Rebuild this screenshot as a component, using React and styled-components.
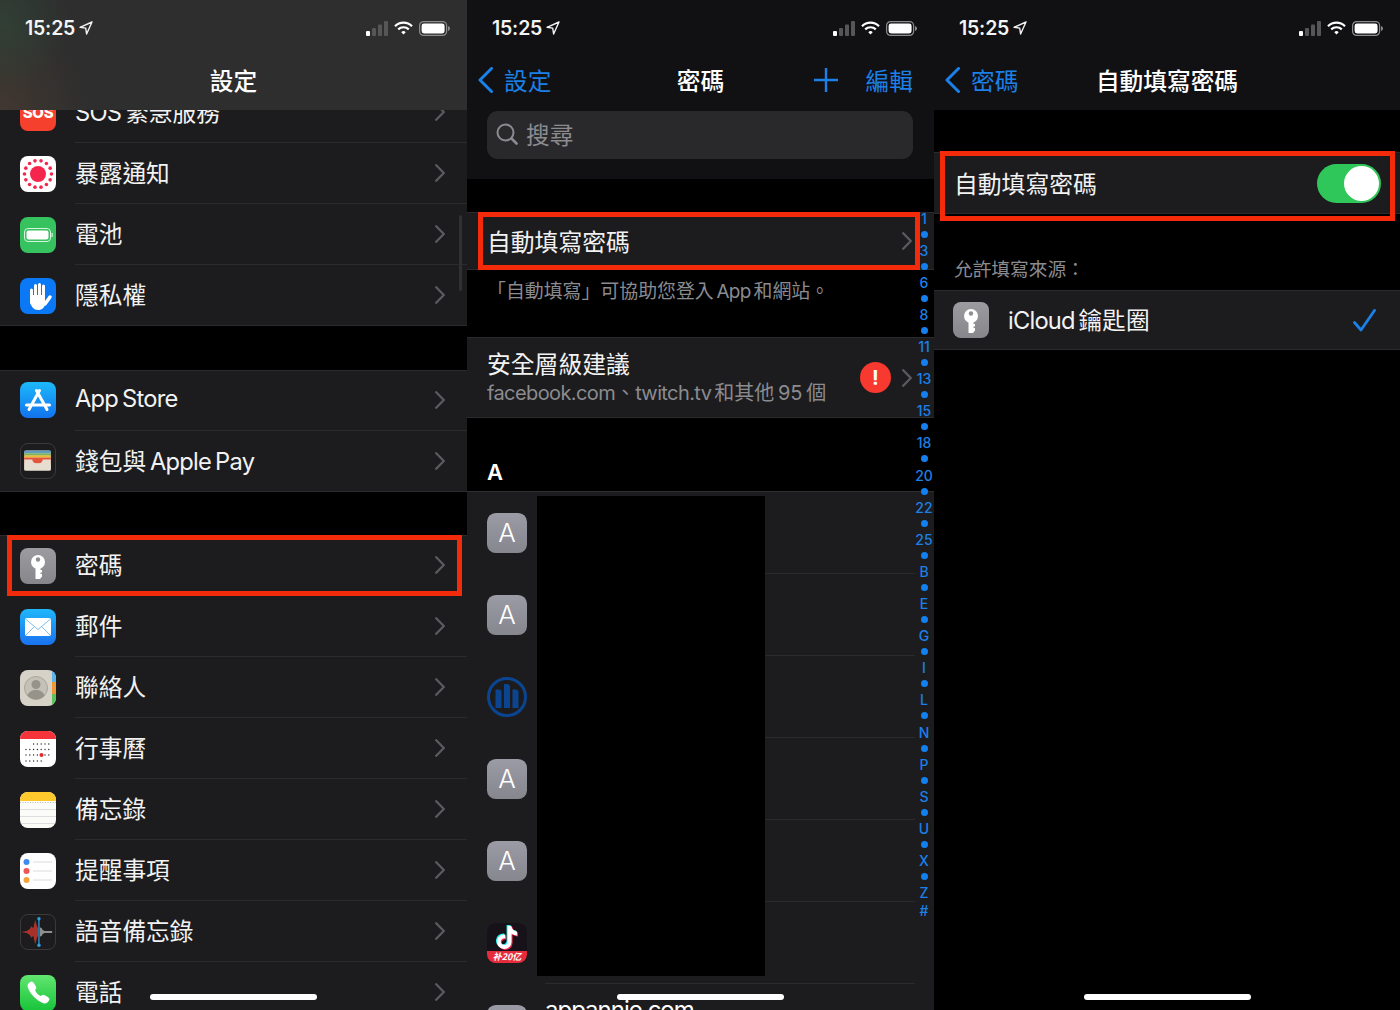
import React from 'react'
import styled, { createGlobalStyle } from 'styled-components'
import { FaTiktok } from 'react-icons/fa'
import { IoCall } from 'react-icons/io5'

const BLUE = '#1b80e8'
const ROW_BG = '#1c1c1e'
const LINE = '#2b2b2d'
const MUTED = '#8b8b90'

const GlobalStyle = createGlobalStyle`
  html, body {
    margin: 0;
    background: #000;
  }
  body {
    font-family: Inter, "Noto Sans CJK TC", sans-serif;
    color: #f2f2f2;
  }
`

const Screens = styled.div`
  display: grid;
  grid-template-columns: 467px 467px 466px;
  width: 1400px;
  height: 1010px;
  overflow: hidden;
  background: #000;
`

const Phone = styled.section`
  position: relative;
  display: flex;
  flex-direction: column;
  height: 1010px;
  overflow: hidden;
  background: #000;
`

const Header = styled.header`
  position: relative;
  z-index: 1;
  flex: none;
  padding-bottom: ${p => p.$bottom || 4}px;
  background: ${p => p.$frosted
    ? 'radial-gradient(circle at 0 20%, rgba(50, 78, 58, .55), transparent 70px), radial-gradient(circle at 0 100%, rgba(78, 62, 50, .6), transparent 90px), #2e2e2e'
    : '#111113'};
`

const StatusBar = styled.div`
  display: flex;
  align-items: center;
  justify-content: space-between;
  height: 56px;
  padding: 0 17px 0 25px;
`

const Clock = styled.div`
  display: flex;
  align-items: center;
  gap: 4px;
  font-size: 19.5px;
  font-weight: 600;
  letter-spacing: -.2px;
  color: #f4f4f4;
`

const StatusIcons = styled.div`
  display: flex;
  align-items: center;
  gap: 6px;
`

const NavBar = styled.nav`
  display: grid;
  grid-template-columns: 1fr auto 1fr;
  align-items: center;
  height: 50px;
  padding: 0 21px 2px;
  box-sizing: border-box;
`

const NavBack = styled.div`
  display: flex;
  align-items: center;
  gap: 11px;
  margin-left: -10px;
  font-size: 23.7px;
  color: ${BLUE};
`

const NavTitle = styled.h1`
  grid-column: 2;
  margin: 0;
  font-size: 23.7px;
  font-weight: 500;
  color: #fff;
`

const NavActions = styled.div`
  display: flex;
  align-items: center;
  justify-content: flex-end;
  gap: 28px;
  font-size: 23.7px;
  color: ${BLUE};
`

const SearchField = styled.div`
  display: flex;
  align-items: center;
  gap: 8px;
  height: 48px;
  margin: 5px 21px 19px 20px;
  padding: 0 0 2px 9px;
  box-sizing: border-box;
  border-radius: 11px;
  background: #29292b;
  font-size: 23.7px;
  color: ${MUTED};
`

const Scroller = styled.div`
  flex: 1;
  min-height: 0;
  overflow: hidden;
`

const ScrollContent = styled.div`
  margin-top: -28px;
`

const Group = styled.div`
  position: relative;
  margin-bottom: ${p => p.$gap || 0}px;
  background: ${ROW_BG};
  box-shadow: inset 0 1px ${LINE}, inset 0 -1px ${LINE};
`

const SettingRow = styled.div`
  position: relative;
  display: flex;
  align-items: center;
  gap: 19px;
  height: 61px;
  padding-left: 20px;
`

const RowBody = styled.div`
  flex: 1;
  display: flex;
  align-items: center;
  justify-content: space-between;
  height: 100%;
  padding-right: 22px;
  border-bottom: 1px solid ${p => p.$last ? 'transparent' : LINE};
  box-sizing: border-box;
  font-size: 23.7px;
`

const RowLabel = styled.span`
  margin-bottom: 2px;
`

const Latin = styled.span`
  letter-spacing: ${p => p.$tight || -0.75}px;
  word-spacing: -2px;
`

const Highlight = styled.div`
  position: absolute;
  inset: ${p => p.$inset};
  z-index: 2;
  border: 5.5px solid #f42b0a;
  pointer-events: none;
`

const ScrollThumb = styled.div`
  position: absolute;
  top: 215px;
  right: 5px;
  width: 3px;
  height: 76px;
  border-radius: 2px;
  background: #303032;
`

const HomeBar = styled.div`
  position: absolute;
  left: 150px;
  bottom: 10px;
  z-index: 3;
  width: 167px;
  height: 6px;
  border-radius: 3px;
  background: #fff;
`

const IconFrame = styled.div`
  flex: none;
  display: flex;
  align-items: center;
  justify-content: center;
  width: ${p => p.$size || 36}px;
  height: ${p => p.$size || 36}px;
  border-radius: ${p => (p.$size || 36) * 0.22}px;
  overflow: hidden;
  box-sizing: border-box;
  background: ${p => p.$bg};
  border: ${p => p.$outlined ? '1px solid #3a3a3c' : 'none'};
  color: #fff;

  svg {
    display: block;
  }
`

const SosMark = styled.span`
  font-size: 15px;
  font-weight: 800;
  letter-spacing: -.3px;
  color: #fff;
`

const LinkRow = styled.div`
  position: relative;
  display: flex;
  align-items: center;
  justify-content: space-between;
  height: 58px;
  padding: 0 22px 0 20px;
  font-size: 23.8px;
`

const AutofillGroup = styled(Group)`
  margin-top: 33px;
`

const Footnote = styled.p`
  height: 67px;
  margin: 0;
  padding: 10px 0 0 20px;
  box-sizing: border-box;
  font-size: 18.9px;
  line-height: 24px;
  color: ${MUTED};
`

const SecurityRow = styled.div`
  display: flex;
  align-items: center;
  height: 81px;
  padding: 0 22px 0 20px;
  box-sizing: border-box;
`

const SecurityText = styled.div`
  flex: 1;
  min-width: 0;
  padding-top: 2px;
`

const SecurityTitle = styled.div`
  font-size: 23.8px;
  line-height: 28px;
`

const SecuritySub = styled.div`
  font-size: 20px;
  line-height: 28px;
  word-spacing: -2px;
  color: ${MUTED};
`

const AlertBadge = styled.div`
  display: flex;
  align-items: center;
  justify-content: center;
  width: 31px;
  height: 31px;
  margin-right: 11px;
  border-radius: 50%;
  background: #f7392f;
  font-size: 20px;
  font-weight: 700;
  color: #fff;
`

const SectionLabel = styled.h2`
  height: 73px;
  margin: 0;
  padding: 0 0 3px 20px;
  box-sizing: border-box;
  display: flex;
  align-items: flex-end;
  font-size: 22px;
  font-weight: 600;
  line-height: 32px;
  color: #fff;
`

const PasswordList = styled.div`
  position: relative;
  background: ${ROW_BG};
  box-shadow: inset 0 1px #2e2e30;
  padding-top: 1px;
`

const PasswordRow = styled.div`
  display: flex;
  align-items: center;
  gap: 18px;
  height: 82px;
  padding-left: 20px;
`

const PasswordBody = styled.div`
  flex: 1;
  align-self: stretch;
  margin-right: 19px;
  padding-top: 11px;
  border-bottom: 1px solid ${LINE};
  box-sizing: border-box;
  font-size: 24px;
  letter-spacing: -1px;
  line-height: 30px;
  color: #fff;
`

const LetterIcon = styled(IconFrame)`
  background: linear-gradient(#9b9ba5, #86868f);
  padding-bottom: 2px;
  font-size: 26px;
  font-weight: 300;
  color: #fff;
`

const Redaction = styled.div`
  position: absolute;
  top: 5px;
  left: 70px;
  z-index: 1;
  width: 228px;
  height: 480px;
  background: #000;
`

const TikTokIcon = styled(IconFrame)`
  flex-direction: column;
  background: #17121a;
`

const TikTokNote = styled.div`
  position: relative;
  flex: 1;
  width: 100%;
`

const NoteLayer = styled(FaTiktok)`
  position: absolute;
  top: 3px;
  left: 9px;
  width: 22px;
  height: 23px;
  color: ${p => p.$tint};
  transform: translate(${p => p.$shift}px, ${p => p.$shift}px);
`

const TikTokBand = styled.div`
  flex: none;
  width: 100%;
  height: 12px;
  background: #e62b3c;
  font-family: "Noto Sans CJK SC", sans-serif;
  font-size: 9px;
  font-weight: 700;
  font-style: italic;
  line-height: 12px;
  text-align: center;
  color: #fff;
`

const IndexRail = styled.div`
  position: absolute;
  top: 210px;
  right: 0;
  z-index: 3;
  display: flex;
  flex-direction: column;
  align-items: center;
  width: 20px;
  font-size: 14px;
  font-weight: 500;
  color: ${BLUE};
`

const IndexItem = styled.div`
  display: flex;
  align-items: center;
  justify-content: center;
  height: 16.07px;

  &:last-child {
    margin-top: 2px;
  }
`

const IndexDot = styled.span`
  width: 7px;
  height: 7px;
  border-radius: 50%;
  background: #1480f0;
`

const ToggleGroup = styled(Group)`
  margin-top: 42px;
`

const ToggleRow = styled(LinkRow)`
  height: 62px;
  padding: 0 19px 0 20px;
`

const Toggle = styled.div`
  display: flex;
  justify-content: flex-end;
  width: 64px;
  height: 39px;
  padding: 2px;
  box-sizing: border-box;
  border-radius: 20px;
  background: #30c75a;
`

const ToggleKnob = styled.span`
  width: 35px;
  height: 35px;
  border-radius: 50%;
  background: #fff;
`

const SourceCaption = styled.p`
  height: 76px;
  margin: 0;
  padding: 0 0 8px 20px;
  box-sizing: border-box;
  display: flex;
  align-items: flex-end;
  font-size: 18.7px;
  line-height: 24px;
  color: ${MUTED};
`

const SourceRow = styled.div`
  display: flex;
  align-items: center;
  gap: 19px;
  height: 60px;
  padding: 0 24px 0 19px;
`

const SourceName = styled.div`
  flex: 1;
  padding-bottom: 2px;
  font-size: 23.7px;
`

const Svg36 = ({ children }) => (
  <svg width='36' height='36' viewBox='0 0 36 36'>{children}</svg>
)

const Chevron = () => (
  <svg width='10' height='18' viewBox='0 0 10 18' fill='none'>
    <path d='M1.2 1.2 8.8 9l-7.600 7.800' stroke='#5b5b5f' strokeWidth='2.300' strokeLinecap='round' strokeLinejoin='round' />
  </svg>
)

const BackChevron = () => (
  <svg width='15' height='26' viewBox='0 0 15 26' fill='none'>
    <path d='M13.500 1.500 2 13l11.500 11.500' stroke={BLUE} strokeWidth='3' strokeLinecap='round' strokeLinejoin='round' />
  </svg>
)

const PlusIcon = () => (
  <svg width='24' height='24' viewBox='0 0 24 24' fill='none'>
    <path d='M12 0v24M0 12h24' stroke={BLUE} strokeWidth='2.400' />
  </svg>
)

const SearchIcon = () => (
  <svg width='22' height='22' viewBox='0 0 22 22' fill='none' stroke={MUTED}>
    <circle cx='9.500' cy='9.500' r='8' strokeWidth='2' />
    <path d='m15.500 15.500 5 5' strokeWidth='2.600' strokeLinecap='round' />
  </svg>
)

const CheckIcon = () => (
  <svg width='23' height='23' viewBox='0 0 23 23' fill='none'>
    <path d='M1.500 13.500 8 21 21.500 1.500' stroke={BLUE} strokeWidth='2.800' strokeLinecap='round' strokeLinejoin='round' />
  </svg>
)

const LocationArrow = () => (
  <svg width='14' height='14' viewBox='0 0 14 14' fill='none'>
    <path d='M13 1 1 6.300l5.700.8.900 5.900z' stroke='#f2f2f2' strokeWidth='1.400' strokeLinejoin='round' />
  </svg>
)

const SignalIcon = () => (
  <svg width='22' height='15' viewBox='0 0 22 15'>
    <rect x='0' y='10' width='4' height='5' rx='1' fill='#fff' />
    <rect x='6' y='7' width='4' height='8' rx='1' fill='#565658' />
    <rect x='12' y='3.500' width='4' height='11.500' rx='1' fill='#565658' />
    <rect x='18' y='0' width='4' height='15' rx='1' fill='#565658' />
  </svg>
)

const WifiIcon = () => (
  <svg width='19' height='14' viewBox='0 0 19 14' fill='none' stroke='#fff' strokeWidth='2.200'>
    <path d='M1 5.200a12 12 0 0 1 17 0' />
    <path d='M4.200 8.400a7.600 7.600 0 0 1 10.600 0' />
    <path d='M9.500 13.500 7.300 11.200a3 3 0 0 1 4.400 0z' fill='#fff' stroke='none' />
  </svg>
)

const BatteryIcon = () => (
  <svg width='31' height='15' viewBox='0 0 31 15'>
    <rect x='.6' y='.6' width='27' height='13.800' rx='4' fill='none' stroke='#8c8c8c' strokeWidth='1.200' />
    <rect x='2.600' y='2.600' width='23' height='9.800' rx='2.400' fill='#fff' />
    <path d='M29 5v5c1.200-.4 2-1.400 2-2.500S30.200 5.400 29 5z' fill='#8c8c8c' />
  </svg>
)

const StatusRow = () => (
  <StatusBar>
    <Clock>15:25 <LocationArrow /></Clock>
    <StatusIcons>
      <SignalIcon />
      <WifiIcon />
      <BatteryIcon />
    </StatusIcons>
  </StatusBar>
)

const KeyIcon = () => (
  <IconFrame $bg='linear-gradient(#9c9ca0, #87878b)'>
    <Svg36>
      <circle cx='18' cy='14' r='7' fill='#fff' />
      <circle cx='18' cy='11.500' r='2.200' fill='#8f8f93' />
      <path d='M15.500 19h5v3h1.500v2.500h-1.500v1.500h1.500v2.500l-2 2.500h-4.500z' fill='#fff' />
    </Svg36>
  </IconFrame>
)

const SosIcon = () => (
  <IconFrame $bg='#f4402c'><SosMark>SOS</SosMark></IconFrame>
)

const exposureDots = Array.from({ length: 14 }, (_, i) => i * (Math.PI * 2) / 14)

const ExposureIcon = () => (
  <IconFrame $bg='#fff'>
    <Svg36>
      <circle cx='18' cy='18' r='8' fill='#f5264e' />
      {exposureDots.map(a => (
        <circle key={a} cx={18 + Math.cos(a) * 13.5} cy={18 + Math.sin(a) * 13.5} r='1.800' fill='#f5264e' />
      ))}
    </Svg36>
  </IconFrame>
)

const BatteryAppIcon = () => (
  <IconFrame $bg='#35c25f'>
    <Svg36>
      <rect x='4.500' y='11.500' width='26' height='13' rx='3.500' fill='none' stroke='#d7f3df' strokeWidth='1' />
      <rect x='6.500' y='13.500' width='22' height='9' rx='2' fill='#fff' />
      <rect x='31.500' y='16' width='1.200' height='4' fill='#d7f3df' />
    </Svg36>
  </IconFrame>
)

const HandIcon = () => (
  <IconFrame $bg='#0b78f5'>
    <Svg36>
      <g stroke='#fff' strokeWidth='3' strokeLinecap='round'>
        <path d='M11.500 12v9M15.500 7.500V19M19.500 6.500V19M23.500 8v12' />
        <path d='M25 26l5-7' strokeWidth='3.500' />
      </g>
      <path d='M10 17h15v8c0 4.500-3 7-7 7-4.500 0-6-3-8-7z' fill='#fff' />
    </Svg36>
  </IconFrame>
)

const AppStoreIcon = () => (
  <IconFrame $bg='linear-gradient(#1cb9f9, #1272ef)'>
    <Svg36>
      <g stroke='#fff' strokeWidth='3' strokeLinecap='round' fill='none'>
        <path d='M9 27.500 19.500 8.500M27 27.500 16.500 8.500M6.500 23h23' />
      </g>
    </Svg36>
  </IconFrame>
)

const WalletIcon = () => (
  <IconFrame $bg='#1c1c1e' $outlined>
    <Svg36>
      <rect x='3.500' y='7' width='28' height='21' rx='2' fill='#e6dfd1' />
      <rect x='3.500' y='7' width='28' height='3' fill='#5f9dbf' />
      <rect x='3.500' y='10' width='28' height='2.200' fill='#7fb356' />
      <rect x='3.500' y='12.200' width='28' height='2.200' fill='#eaba30' />
      <rect x='3.500' y='14.400' width='28' height='6' fill='#e4553e' />
      <path d='M3.500 16.500H12a5.500 4.500 0 0 0 11 0h8.500V28h-28z' fill='#e6dfd1' />
    </Svg36>
  </IconFrame>
)

const MailIcon = () => (
  <IconFrame $bg='linear-gradient(#1fb6fb, #1a72ef)'>
    <Svg36>
      <rect x='5' y='9' width='26' height='18' rx='2' fill='#fff' />
      <path d='M5.500 10 18 20.500 30.500 10M5.500 26.500l9-9M30.500 26.500l-9-9' fill='none' stroke='#7cc0f5' strokeWidth='1' />
    </Svg36>
  </IconFrame>
)

const ContactsIcon = () => (
  <IconFrame $bg='#d6d2c7'>
    <Svg36>
      <rect x='32' y='0' width='4' height='12' fill='#5bb5e8' />
      <rect x='32' y='12' width='4' height='12' fill='#f09a37' />
      <rect x='32' y='24' width='4' height='12' fill='#5bc35c' />
      <circle cx='16' cy='18' r='11.500' fill='#c5c1b6' stroke='#a8a59b' strokeWidth='1' />
      <circle cx='16' cy='14.500' r='4.500' fill='#96938a' />
      <path d='M7.500 25.500c1.500-4 4.500-5.500 8.500-5.500s7 1.500 8.500 5.500A11.500 11.500 0 0 1 7.500 25.500z' fill='#96938a' />
    </Svg36>
  </IconFrame>
)

const calendarDots = [
  { y: 13, from: 2 },
  { y: 18.5, from: 0 },
  { y: 24, from: 0 },
  { y: 30, from: 0, to: 5 },
]

const CalendarIcon = () => (
  <IconFrame $bg='#fff'>
    <Svg36>
      <rect width='36' height='8' fill='#f4343a' />
      {calendarDots.map(row =>
        Array.from({ length: 7 }, (_, i) => i)
          .filter(i => i >= row.from && i < (row.to || 7))
          .map(i => (
            <circle key={`${row.y}-${i}`} cx={6 + i * 3.8} cy={row.y} r='.7' fill='#2a2a2a' />
          )),
      )}
      <circle cx='21.500' cy='24' r='2' fill='#e8262c' />
    </Svg36>
  </IconFrame>
)

const NotesIcon = () => (
  <IconFrame $bg='#fbfbf8'>
    <Svg36>
      <rect width='36' height='9' fill='#fdc92d' />
      <path d='M0 10.500h36' stroke='#bbb' strokeDasharray='1 1.500' />
      <path d='M0 17.500h36M0 24.500h36M0 31.500h36' stroke='#dedede' />
    </Svg36>
  </IconFrame>
)

const RemindersIcon = () => (
  <IconFrame $bg='#fff'>
    <Svg36>
      <circle cx='6.500' cy='9' r='3' fill='#3d8bef' />
      <circle cx='6.500' cy='18' r='3' fill='#ee5555' />
      <circle cx='6.500' cy='27' r='3' fill='#f3a33c' />
      <path d='M13 9h19M13 18h19M13 27h19' stroke='#dcdcdc' />
    </Svg36>
  </IconFrame>
)

const VoiceMemosIcon = () => (
  <IconFrame $bg='#1c1c1e' $outlined>
    <Svg36>
      <path d='M0 18l6-1 3-2 2-3 2 2 2-9 2 7 1 2v8l-1 2-2 7-2-9-2 2-2-3-3-2z' fill='#a8322a' />
      <path d='M20 13l2 1 1 2 2 1h8v2h-8l-2 1-1 2-2 1z' fill='#8d8d8d' />
      <path d='M19 3v30' stroke='#2f9fe0' strokeWidth='1.300' />
      <circle cx='19' cy='4' r='1.800' fill='#2f9fe0' />
      <circle cx='19' cy='32' r='1.800' fill='#2f9fe0' />
    </Svg36>
  </IconFrame>
)

const PhoneIcon = () => (
  <IconFrame $bg='linear-gradient(#62e670, #17c33a)'>
    <IoCall size={25} color='#fff' />
  </IconFrame>
)

const AllianzIcon = () => (
  <IconFrame $size={40} $bg='transparent'>
    <svg width='40' height='40' viewBox='0 0 40 40'>
      <circle cx='20' cy='20' r='18.500' fill='none' stroke='#0b4591' strokeWidth='3' />
      <path d='M8.500 12.500h4l2 1.500v17h-6zM17 7h4l2 2v22h-6zM25.500 12.500h4l2 1.500v17h-6z' fill='#0b4591' />
    </svg>
  </IconFrame>
)

const TikTokApp = () => (
  <TikTokIcon $size={40}>
    <TikTokNote>
      <NoteLayer $tint='#25f4ee' $shift={-1} />
      <NoteLayer $tint='#fe2c55' $shift={1} />
      <NoteLayer $tint='#fff' $shift={0} />
    </TikTokNote>
    <TikTokBand>补20亿</TikTokBand>
  </TikTokIcon>
)

const settingsGroups = [
  {
    gap: 43.5,
    rows: [
      { label: <><Latin>SOS </Latin>緊急服務</>, Icon: SosIcon },
      { label: '暴露通知', Icon: ExposureIcon },
      { label: '電池', Icon: BatteryAppIcon },
      { label: '隱私權', Icon: HandIcon },
    ],
  },
  {
    gap: 43.5,
    rows: [
      { label: <Latin>App Store</Latin>, Icon: AppStoreIcon },
      { label: <>錢包與<Latin> Apple Pay</Latin></>, Icon: WalletIcon },
    ],
  },
  {
    rows: [
      { label: '密碼', Icon: KeyIcon, marked: true },
      { label: '郵件', Icon: MailIcon },
      { label: '聯絡人', Icon: ContactsIcon },
      { label: '行事曆', Icon: CalendarIcon },
      { label: '備忘錄', Icon: NotesIcon },
      { label: '提醒事項', Icon: RemindersIcon },
      { label: '語音備忘錄', Icon: VoiceMemosIcon },
      { label: '電話', Icon: PhoneIcon },
    ],
  },
]

const indexLabels = ['1', '3', '6', '8', '11', '13', '15', '18', '20', '22', '25', 'B', 'E', 'G', 'I', 'L', 'N', 'P', 'S', 'U', 'X', 'Z']

const SettingsScreen = () => (
  <Phone>
    <Header $frosted>
      <StatusRow />
      <NavBar><NavTitle>設定</NavTitle></NavBar>
    </Header>
    <Scroller>
      <ScrollContent>
        {settingsGroups.map((group, g) => (
          <Group key={g} $gap={group.gap}>
            {group.rows.map(({ label, Icon, marked }, i) => (
              <SettingRow key={i}>
                <Icon />
                <RowBody $last={i === group.rows.length - 1 || marked}>
                  <RowLabel>{label}</RowLabel>
                  <Chevron />
                </RowBody>
                {marked && <Highlight $inset='0 5px 0 7px' />}
              </SettingRow>
            ))}
          </Group>
        ))}
      </ScrollContent>
    </Scroller>
    <ScrollThumb />
    <HomeBar />
  </Phone>
)

const PasswordsScreen = () => (
  <Phone>
    <Header $bottom={1}>
      <StatusRow />
      <NavBar>
        <NavBack><BackChevron />設定</NavBack>
        <NavTitle>密碼</NavTitle>
        <NavActions><PlusIcon />編輯</NavActions>
      </NavBar>
      <SearchField><SearchIcon />搜尋</SearchField>
    </Header>
    <Scroller>
      <AutofillGroup>
        <LinkRow>
          <RowLabel>自動填寫密碼</RowLabel>
          <Chevron />
          <Highlight $inset='0 14px 0 11px' />
        </LinkRow>
      </AutofillGroup>
      <Footnote>「自動填寫」可協助您登入<Latin $tight={-0.6}> App </Latin>和網站。</Footnote>
      <Group>
        <SecurityRow>
          <SecurityText>
            <SecurityTitle>安全層級建議</SecurityTitle>
            <SecuritySub><Latin $tight={-0.6}>facebook.com</Latin>、<Latin $tight={-0.6}>twitch.tv </Latin>和其他 95 個</SecuritySub>
          </SecurityText>
          <AlertBadge>!</AlertBadge>
          <Chevron />
        </SecurityRow>
      </Group>
      <SectionLabel>A</SectionLabel>
      <PasswordList>
        <PasswordRow><LetterIcon $size={40}>A</LetterIcon><PasswordBody /></PasswordRow>
        <PasswordRow><LetterIcon $size={40}>A</LetterIcon><PasswordBody /></PasswordRow>
        <PasswordRow><AllianzIcon /><PasswordBody /></PasswordRow>
        <PasswordRow><LetterIcon $size={40}>A</LetterIcon><PasswordBody /></PasswordRow>
        <PasswordRow><LetterIcon $size={40}>A</LetterIcon><PasswordBody /></PasswordRow>
        <PasswordRow><TikTokApp /><PasswordBody /></PasswordRow>
        <PasswordRow><LetterIcon $size={40}>A</LetterIcon><PasswordBody>appannie.com</PasswordBody></PasswordRow>
        <Redaction />
      </PasswordList>
    </Scroller>
    <IndexRail>
      {indexLabels.map(label => (
        <React.Fragment key={label}>
          <IndexItem>{label}</IndexItem>
          {label !== 'Z' && <IndexItem><IndexDot /></IndexItem>}
        </React.Fragment>
      ))}
      <IndexItem>#</IndexItem>
    </IndexRail>
    <HomeBar />
  </Phone>
)

const AutofillScreen = () => (
  <Phone>
    <Header>
      <StatusRow />
      <NavBar>
        <NavBack><BackChevron />密碼</NavBack>
        <NavTitle>自動填寫密碼</NavTitle>
      </NavBar>
    </Header>
    <ToggleGroup>
      <ToggleRow>
        <RowLabel>自動填寫密碼</RowLabel>
        <Toggle><ToggleKnob /></Toggle>
        <Highlight $inset='-1px 5px -7px 6px' />
      </ToggleRow>
    </ToggleGroup>
    <SourceCaption>允許填寫來源：</SourceCaption>
    <Group>
      <SourceRow>
        <KeyIcon />
        <SourceName><Latin $tight={-0.8}>iCloud </Latin>鑰匙圈</SourceName>
        <CheckIcon />
      </SourceRow>
    </Group>
    <HomeBar />
  </Phone>
)

const App = () => (
  <>
    <GlobalStyle />
    <Screens>
      <SettingsScreen />
      <PasswordsScreen />
      <AutofillScreen />
    </Screens>
  </>
)

export default App
